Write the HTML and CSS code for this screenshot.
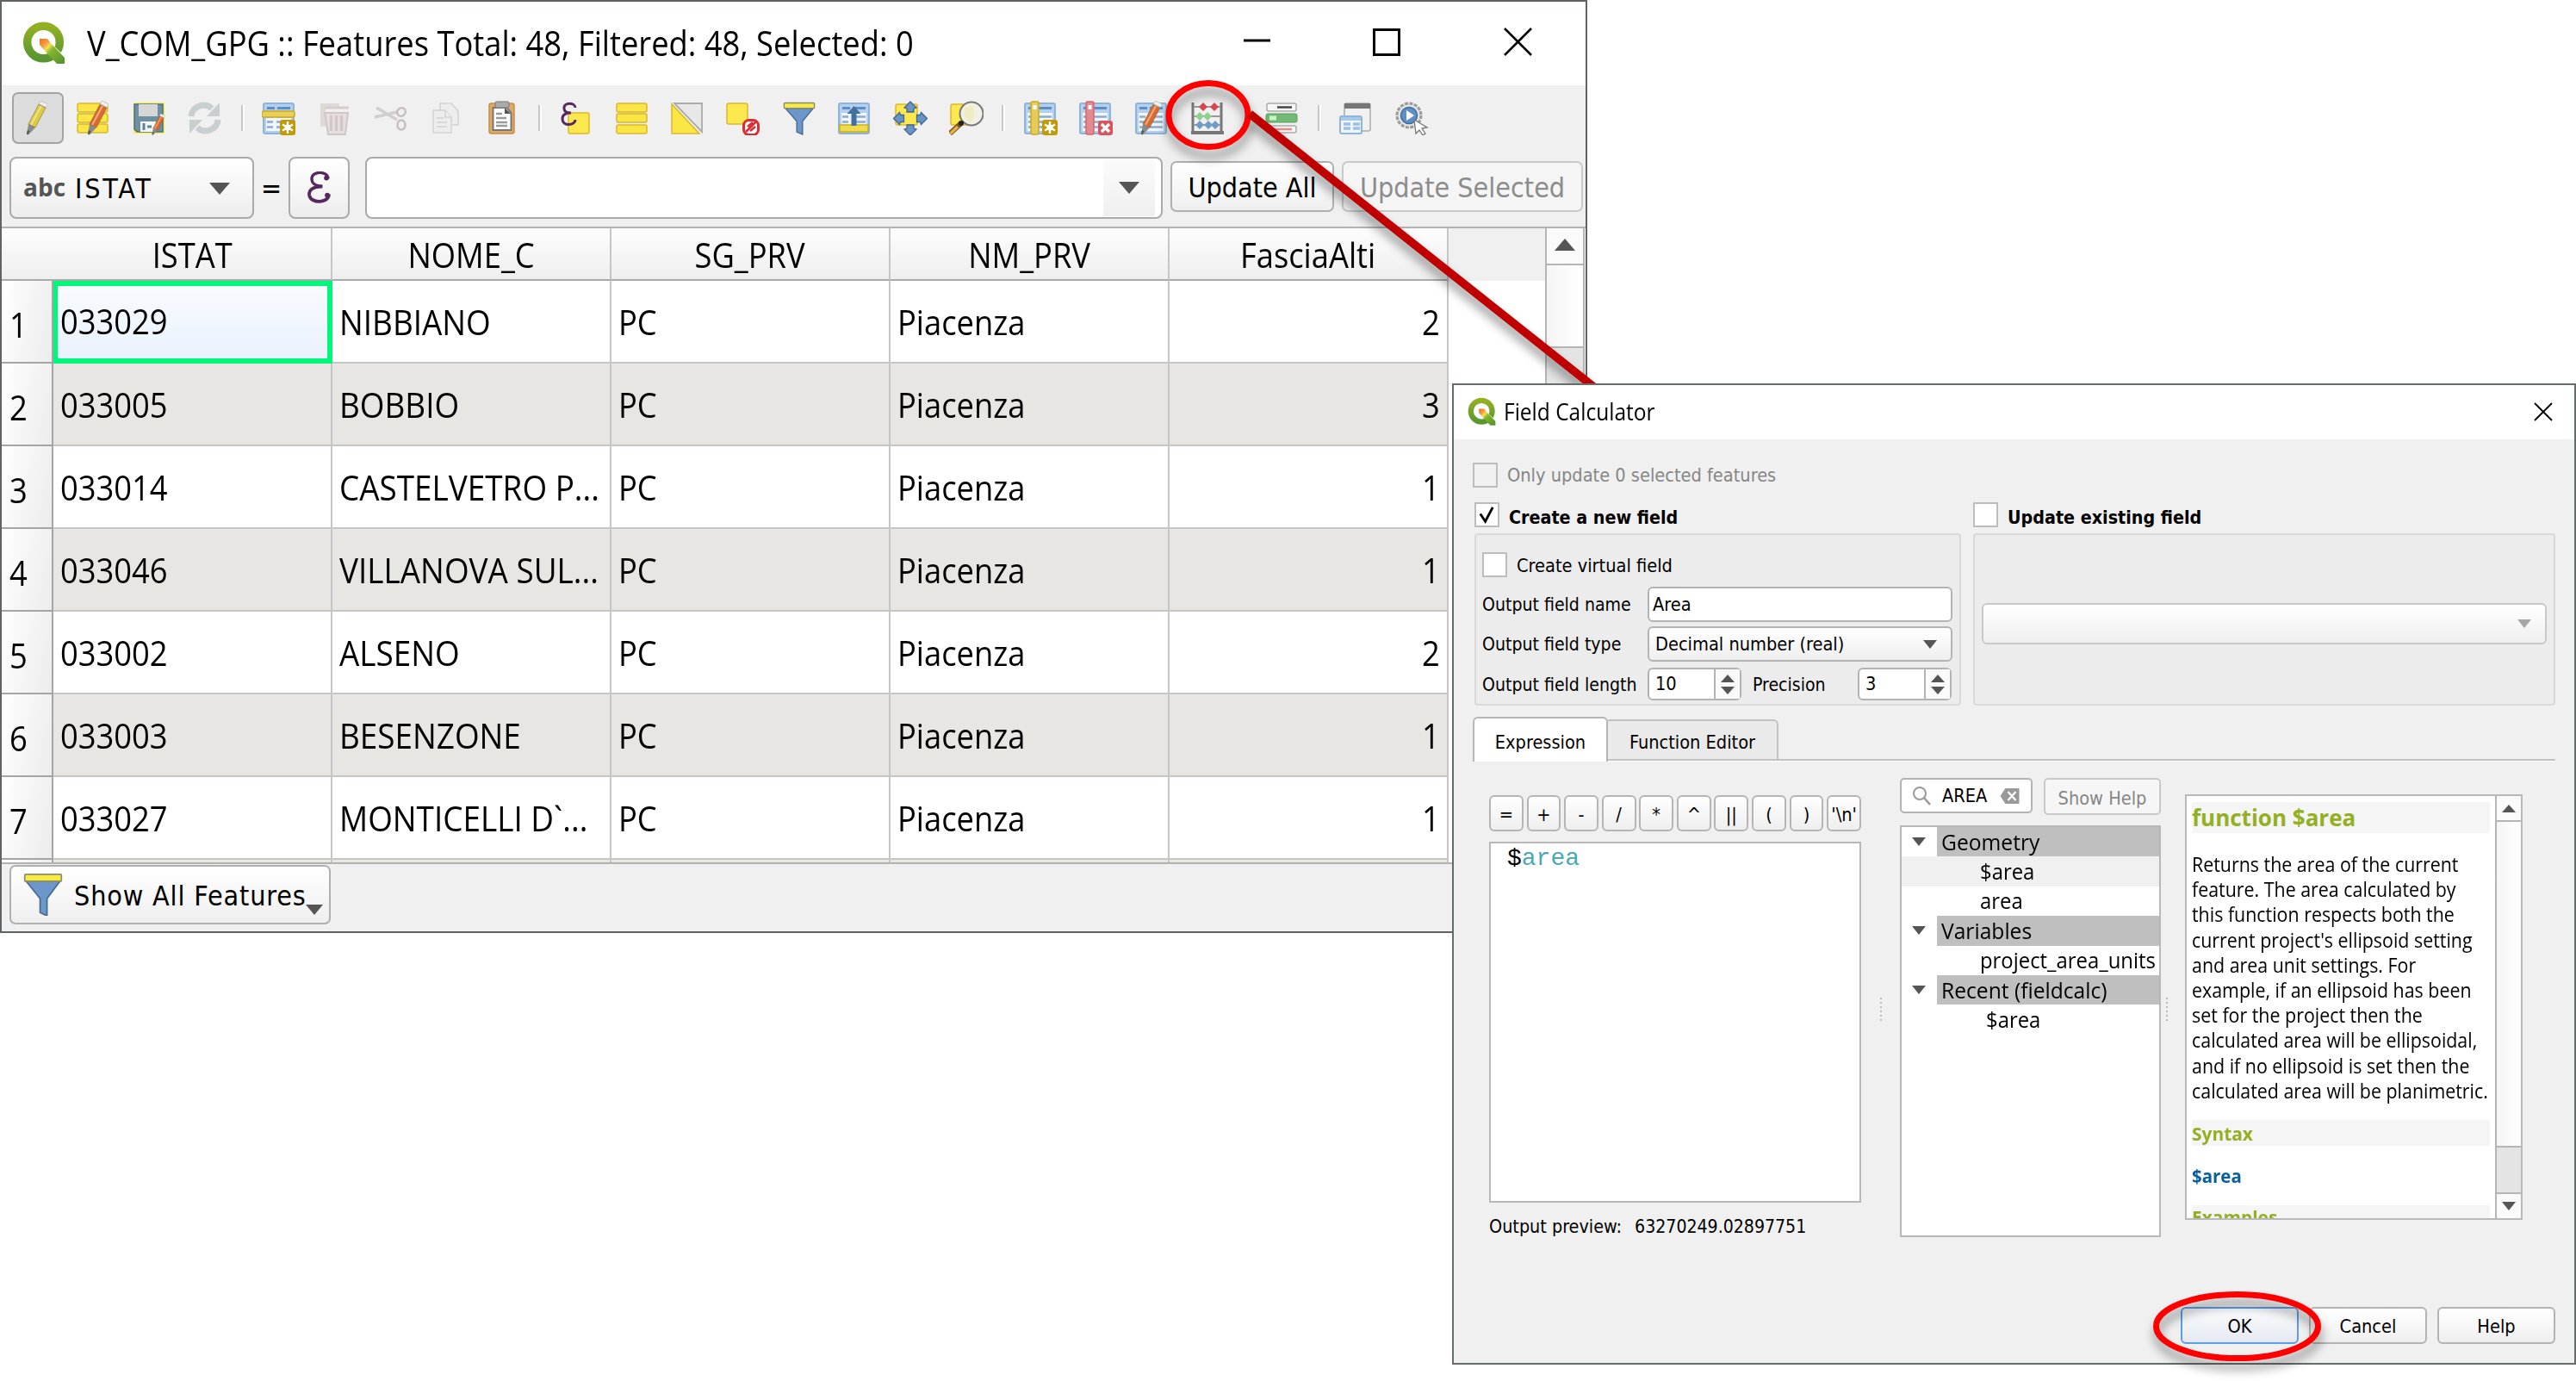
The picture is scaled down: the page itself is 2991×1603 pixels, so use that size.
FILE: index.html
```html
<!DOCTYPE html>
<html lang="en">
<head>
<meta charset="utf-8">
<title>Field Calculator</title>
<link rel="stylesheet" href="styles.css">
</head>
<body>
<svg class="defs" width="0" height="0">
  <defs>
    <linearGradient id="qg" x1="0" y1="0" x2="0" y2="1"><stop offset="0" stop-color="#93b023"/><stop offset="1" stop-color="#589632"/></linearGradient>
    <linearGradient id="qt" gradientUnits="userSpaceOnUse" x1="20" y1="22" x2="46" y2="47"><stop offset="0" stop-color="#ee7913"/><stop offset=".22" stop-color="#f5a04a"/><stop offset=".34" stop-color="#f2e25a"/><stop offset=".5" stop-color="#86b52a"/><stop offset="1" stop-color="#589632"/></linearGradient>
    <symbol id="logo" viewBox="0 0 50 49">
      <circle cx="24.5" cy="24" r="18.8" fill="none" stroke="url(#qg)" stroke-width="9.5"/>
      <path d="M27 32 L32 24 L50 41 L50 49 L42 49Z" fill="#fff"/>
      <path d="M20 20h9l4 5 16 17v7h-9L26 34l-6-7z" fill="url(#qt)"/>
    </symbol>
    <symbol id="pencil" viewBox="0 0 24 40">
      <path d="M14 4l8 4-12 23-8-4z" fill="currentColor"/>
      <path d="M17 6l-12 22" stroke="#fff" stroke-opacity=".45" stroke-width="2"/>
      <path d="M14 4l2.500-4 8 4-2.500 4z" fill="#eee" stroke="#bbb" stroke-width=".8"/>
      <path d="M2 27l8 4-8 8.500-2-1z" fill="#8b8b8b"/><path d="M1 34l2.500 1.500-2.500 4-1-1z" fill="#555"/>
      <path d="M14 4l8 4-12 23-8-4z" fill="none" stroke="#6b5a2a" stroke-opacity=".5" stroke-width="1"/>
    </symbol>
    <symbol id="grid" viewBox="0 0 40 40">
      <rect x="2" y="3" width="35" height="35" rx="2" fill="#b4d0ec" stroke="#8fb4da" stroke-width="2"/>
      <rect x="5" y="14" width="29" height="21" fill="#f1f6fb"/>
      <path d="M6 8.500h9M18 8.500h15" stroke="#5b8fc9" stroke-width="3"/>
      <path d="M6 18.500h7M17 18.500h16M6 24.500h7M17 24.500h16M6 30.500h7M17 30.500h16" stroke="#8aabcf" stroke-width="2.500"/>
    </symbol>
    <symbol id="star" viewBox="0 0 18 18"><rect width="18" height="18" rx="3" fill="#c39a06"/><path d="M9 2v14M3 5.500l12 7M15 5.500l-12 7" stroke="#fff" stroke-width="2.400"/><circle cx="9" cy="9" r="3.500" fill="#fff"/></symbol>
    <symbol id="funnel" viewBox="0 0 40 40">
      <path d="M3 8L17 24v13l7 3V24L37 8z" fill="#6d97c8" stroke="#466a94" stroke-width="1.500"/>
      <rect x="1.500" y="1.500" width="37" height="6.500" rx="1" fill="#f6ea44" stroke="#8d8d6a" stroke-width="1.500"/>
    </symbol>
  </defs>
</svg>

<section class="window table-window">
  <header class="titlebar">
    <svg class="logo"><use href="#logo"/></svg>
    <span class="ui title-text">V_COM_GPG :: Features Total: 48, Filtered: 48, Selected: 0</span>
    <svg class="window-buttons" viewBox="0 0 330 40"><path d="M1 16h31" stroke="#000" stroke-width="3"/><rect x="152.500" y="3.500" width="29" height="29" fill="none" stroke="#000" stroke-width="3"/><path d="M304 2l31 31M335 2l-31 31" stroke="#000" stroke-width="2.500"/></svg>
  </header>

  <nav class="toolbar">
    <div class="tool active"><svg viewBox="0 0 40 40"><use href="#pencil" class="yellow" x="7" width="24" height="40"/></svg></div>
    <div class="tool"><svg viewBox="0 0 40 40"><g fill="#fbe646" stroke="#d9b82c" stroke-width="1.500"><rect x="1" y="3" width="35" height="10" rx="2"/><rect x="1" y="15" width="35" height="10" rx="2"/><rect x="1" y="27" width="35" height="10" rx="2"/></g><use href="#pencil" class="orange" x="13" width="24" height="40"/></svg></div>
    <div class="tool"><svg viewBox="0 0 40 40"><rect x="1" y="2" width="36" height="36" rx="2" fill="#f8f33a"/><path d="M2 4h33v32H5l-3-3z" fill="#6f8fa3" stroke="#52707f" stroke-width="1.500"/><rect x="7" y="4" width="22" height="14" fill="#d6d6d6"/><rect x="9" y="24" width="18" height="12" fill="#f4f8fa"/><path d="M13 26v8M17 30h5" stroke="#5b83a0" stroke-width="3"/><use href="#pencil" class="orange" x="22" y="15" width="16" height="25"/></svg></div>
    <div class="tool"><svg viewBox="0 0 40 40"><path d="M4 18C5 6 20 1 28 9" fill="none" stroke="#c9ced1" stroke-width="7"/><path d="M37 2v16H22z" fill="#c9ced1"/><path d="M35 22c-1 12-16 17-24 9" fill="none" stroke="#c9ced1" stroke-width="7"/><path d="M2 38V22h15z" fill="#c9ced1"/></svg></div>
    <i class="sep"></i>
    <div class="tool"><svg viewBox="0 0 40 40"><use href="#grid"/><rect x="0" y="12" width="38" height="7" rx="2" fill="#e8cf5a" stroke="#cda91f" stroke-width="1.500"/><use href="#star" x="21" y="22" width="18" height="18"/></svg></div>
    <div class="tool"><svg viewBox="0 0 40 40" opacity=".55"><path d="M3 3h22v5h-16v22H3z" fill="#cfcac2"/><path d="M8 8h28" stroke="#c4aeb0" stroke-width="3"/><path d="M8 14h27l-3 25H12z" fill="#decfd0" stroke="#bda5a8" stroke-width="2"/><path d="M15.500 17v18M21.500 17v18M27.500 17v18" stroke="#bda5a8" stroke-width="3"/></svg></div>
    <div class="tool"><svg viewBox="0 0 40 40" fill="none" stroke="#c7bdbd" stroke-width="2.500"><path d="M3 8l24 14M1 19l26-6" stroke="#cfcfcf" stroke-width="3.500"/><ellipse cx="32" cy="13" rx="5" ry="4.500" transform="rotate(-40 32 13)"/><ellipse cx="32" cy="28" rx="4.500" ry="5.500"/></svg></div>
    <div class="tool"><svg viewBox="0 0 40 40" fill="#ededed" stroke="#d2d2d2" stroke-width="1.500"><path d="M13 3h13l8 9v16H13z"/><path d="M5 11h14l7 8v18H5z"/><path d="M9 20h8M9 25h12M9 30h12M19 11v8h7"/></svg></div>
    <div class="tool"><svg viewBox="0 0 40 40"><rect x="5" y="3" width="29" height="35" rx="2.500" fill="#dcab67" stroke="#c48f47" stroke-width="1.500"/><path d="M9.500 8h16l5 6v20h-21z" fill="#fff" stroke="#777" stroke-width="2"/><rect x="12" y="1" width="16" height="7" rx="1.500" fill="#aaa" stroke="#777"/><path d="M13 15h7M13 20h12M13 25h13M13 29h13" stroke="#9a9a9a" stroke-width="2.500"/><path d="M23 8l7 7h-7z" fill="#555"/></svg></div>
    <i class="sep"></i>
    <div class="tool"><svg viewBox="0 0 40 40"><rect x="11" y="14" width="24" height="24" rx="2" fill="#fde94d" stroke="#d9b82c" stroke-width="1.500"/><path d="M19 8c0-6-14-7-13 1 0 5 6 5 8 5-5 0-10 1-10 7 0 9 15 8 15 1" fill="none" stroke="#55285f" stroke-width="3"/></svg></div>
    <div class="tool"><svg viewBox="0 0 40 40" fill="#fbe646" stroke="#d9b82c" stroke-width="1.500"><rect x="2" y="3" width="35" height="10" rx="2"/><rect x="2" y="15" width="35" height="10" rx="2"/><rect x="2" y="28" width="35" height="10" rx="2"/></svg></div>
    <div class="tool"><svg viewBox="0 0 40 40"><path d="M2 4v34h32z" fill="#fbe646" stroke="#d9b82c" stroke-width="1.500"/><path d="M5 3h32v33z" fill="#e8e8e8" stroke="#aaa" stroke-width="1.800"/></svg></div>
    <div class="tool"><svg viewBox="0 0 40 40"><rect x="1" y="3" width="24" height="24" rx="2" fill="#fde94d" stroke="#d9b82c" stroke-width="1.500"/><rect x="20.500" y="22.500" width="17" height="17" rx="6" fill="#fff" stroke="#df2c33" stroke-width="3"/><path d="M23 36l12-12M25 30l6-5M28 35l6-5" stroke="#df2c33" stroke-width="2.500"/></svg></div>
    <div class="tool"><svg viewBox="0 0 40 40"><use href="#funnel" x="1" width="38" height="40"/></svg></div>
    <div class="tool"><svg viewBox="0 0 40 40"><use href="#grid"/><rect x="3" y="28" width="33" height="8" fill="#f0dc4a" stroke="#c9ae1e" stroke-width="1.500"/><path d="M19.500 6l8 9h-5v14h-6V15h-5z" fill="#44709f"/></svg></div>
    <div class="tool"><svg viewBox="0 0 40 40"><rect x="3" y="4" width="25" height="24" rx="2" fill="#fde94d" stroke="#d9b82c" stroke-width="1.500"/><g fill="#6a94c4" stroke="#3f6690" stroke-width="1.300"><path id="ar" d="M20 1l7 7-3 1v4h-8V9l-3-1z"/><use href="#ar" transform="rotate(90 20 20.500)"/><use href="#ar" transform="rotate(180 20 20.500)"/><use href="#ar" transform="rotate(270 20 20.500)"/></g></svg></div>
    <div class="tool"><svg viewBox="0 0 40 40"><rect x="2" y="4" width="20" height="24" rx="2" fill="#fde94d" stroke="#d9b82c" stroke-width="1.500"/><path d="M14 26L1 38" stroke="#6f5a2a" stroke-width="6"/><path d="M10 30L1.500 38" stroke="#f0b03a" stroke-width="3.500"/><circle cx="26" cy="15" r="13.500" fill="#f1f0e4" stroke="#777" stroke-width="2"/><path d="M26 5c4 5 4 15-1 20-8-2-9-14-6-18z" fill="#efe9a8" opacity=".6"/><circle cx="14" cy="26" r="3" fill="#222"/></svg></div>
    <i class="sep"></i>
    <div class="tool"><svg viewBox="0 0 40 40"><use href="#grid"/><rect x="9" y="1" width="9" height="38" rx="2" fill="#e3cc5a" stroke="#cda91f" stroke-width="1.500"/><rect x="11.500" y="5" width="4" height="5" fill="#fff"/><use href="#star" x="22" y="22" width="18" height="18"/></svg></div>
    <div class="tool"><svg viewBox="0 0 40 40"><use href="#grid"/><rect x="9" y="1" width="9" height="38" rx="2" fill="#e28a90" stroke="#d5656d" stroke-width="1.500"/><rect x="11.500" y="5" width="4" height="5" fill="#fff"/><rect x="23" y="23" width="17" height="17" rx="3" fill="#d8555e"/><path d="M27 27l9 9M36 27l-9 9" stroke="#fff" stroke-width="3.500"/></svg></div>
    <div class="tool"><svg viewBox="0 0 40 40"><use href="#grid"/><use href="#pencil" class="orange" x="8" width="24" height="40"/></svg></div>
    <div class="tool"><svg viewBox="0 0 40 40"><path d="M3 2v35M36 2v35" stroke="#777" stroke-width="3"/><path d="M4 7h31M4 18h31M4 28h31" stroke="#999" stroke-width="2"/><path d="M1 37h38" stroke="#777" stroke-width="4"/><g stroke-width="1"><path d="M15 2l5 5-5 5-5-5zM28 2l5 5-5 5-5-5z" fill="#d5474d"/><path d="M11 13l5 5-5 5-5-5zM20 13l5 5-5 5-5-5z" fill="#8fd08c"/><path d="M11 23l5 5-5 5-5-5zM21 23l5 5-5 5-5-5zM29 23l5 5-5 5-5-5z" fill="#6d9cc4"/></g></svg></div>
    <i class="sep hidden"></i>
    <div class="tool"><svg viewBox="0 0 40 40"><g fill="#f6f6f6" stroke="#aaa" stroke-width="1.500"><rect x="3" y="3" width="34" height="9" rx="2"/><rect x="3" y="29" width="34" height="8" rx="2"/></g><rect x="2" y="15" width="36" height="10" rx="2" fill="#74b877" stroke="#57a05b"/><rect x="6" y="17.500" width="8" height="5" fill="#c9f7c4"/><path d="M15 7.500h17" stroke="#444" stroke-width="2.500"/><path d="M8 33h24" stroke="#e58b8b" stroke-width="2.500"/></svg></div>
    <i class="sep"></i>
    <div class="tool"><svg viewBox="0 0 40 40"><rect x="7" y="3" width="30" height="32" rx="2" fill="#f1f1f1" stroke="#aaa" stroke-width="1.500"/><path d="M7 6h30" stroke="#777" stroke-width="6"/><rect x="2" y="18" width="25" height="20" rx="2" fill="#eef5fb" stroke="#8fb4da" stroke-width="2"/><path d="M3 21h23" stroke="#a9c9e8" stroke-width="4"/><path d="M6 27h8M17 27h8M6 32h8M17 32h8" stroke="#9dc0e4" stroke-width="3.500"/></svg></div>
    <div class="tool"><svg viewBox="0 0 40 40"><circle cx="17" cy="17" r="14" fill="#e4e4e4" stroke="#999" stroke-width="3" stroke-dasharray="4 1.500"/><circle cx="17" cy="17" r="9.500" fill="#5f8fc6" stroke="#3d6da2" stroke-width="1.500"/><path d="M14 11l9 6-9 6z" fill="#fff"/><path d="M23 22l15 9-6 1 4 6-3 2-4-6-4 4z" fill="#fff" stroke="#777" stroke-width="1.300"/></svg></div>
  </nav>

  <div class="field-bar">
    <div class="combo field-combo"><b class="abc">abc</b><span class="tah">ISTAT</span><i class="arrow"></i></div>
    <span class="equals">=</span>
    <div class="combo epsilon"><svg viewBox="0 0 30 40"><path d="M26 9C26-1 6-1 6 9c0 7 7 9 13 9" fill="none" stroke="#55285f" stroke-width="3.500"/><path d="M19 18.500C9 18 2 22 3 29c2 11 24 10 24-1" fill="none" stroke="#55285f" stroke-width="4"/><circle cx="24" cy="8" r="3" fill="#55285f"/><circle cx="25" cy="29" r="3" fill="#55285f"/></svg></div>
    <div class="combo value-combo"><div class="drop"><i class="arrow"></i></div></div>
    <div class="btn update-all tah">Update All</div>
    <div class="btn update-sel tah disabled">Update Selected</div>
  </div>

  <div class="table-area">
    <div class="grid">
      <div class="row head"><div></div><div><span class="ui">ISTAT</span></div><div><span class="ui">NOME_C</span></div><div><span class="ui">SG_PRV</span></div><div><span class="ui">NM_PRV</span></div><div><span class="ui">FasciaAlti</span></div></div>
      <div class="row"><div class="n"><span class="ui">1</span></div><div class="current"><span class="ui">033029</span></div><div><span class="ui caps">NIBBIANO</span></div><div><span class="ui">PC</span></div><div><span class="ui">Piacenza</span></div><div class="num"><span class="ui">2</span></div></div>
      <div class="row alt"><div class="n"><span class="ui">2</span></div><div><span class="ui">033005</span></div><div><span class="ui caps">BOBBIO</span></div><div><span class="ui">PC</span></div><div><span class="ui">Piacenza</span></div><div class="num"><span class="ui">3</span></div></div>
      <div class="row"><div class="n"><span class="ui">3</span></div><div><span class="ui">033014</span></div><div><span class="ui caps">CASTELVETRO P...</span></div><div><span class="ui">PC</span></div><div><span class="ui">Piacenza</span></div><div class="num"><span class="ui">1</span></div></div>
      <div class="row alt"><div class="n"><span class="ui">4</span></div><div><span class="ui">033046</span></div><div><span class="ui caps">VILLANOVA SUL...</span></div><div><span class="ui">PC</span></div><div><span class="ui">Piacenza</span></div><div class="num"><span class="ui">1</span></div></div>
      <div class="row"><div class="n"><span class="ui">5</span></div><div><span class="ui">033002</span></div><div><span class="ui caps">ALSENO</span></div><div><span class="ui">PC</span></div><div><span class="ui">Piacenza</span></div><div class="num"><span class="ui">2</span></div></div>
      <div class="row alt"><div class="n"><span class="ui">6</span></div><div><span class="ui">033003</span></div><div><span class="ui caps">BESENZONE</span></div><div><span class="ui">PC</span></div><div><span class="ui">Piacenza</span></div><div class="num"><span class="ui">1</span></div></div>
      <div class="row"><div class="n"><span class="ui">7</span></div><div><span class="ui">033027</span></div><div><span class="ui caps">MONTICELLI D`...</span></div><div><span class="ui">PC</span></div><div><span class="ui">Piacenza</span></div><div class="num"><span class="ui">1</span></div></div>
      <div class="row alt sliver"><div class="n"></div><div></div><div></div><div></div><div></div><div></div></div>
    </div>
    <div class="filler"></div>
    <div class="scroll big"><div class="step"><i class="arrow up"></i></div><div class="thumb"></div><div class="track"></div></div>
  </div>

  <footer class="status"><div class="btn show-all"><svg viewBox="0 0 40 40" preserveAspectRatio="none"><use href="#funnel"/></svg><span class="tah">Show All Features</span><i class="arrow"></i></div></footer>
</section>

<svg class="annotation pointer" viewBox="0 0 2991 1603">
  <ellipse cx="1403" cy="133.500" rx="46" ry="37" fill="none" stroke="#fe0000" stroke-width="7"/>
  <path d="M1451 132L1858 455" stroke="#c00000" stroke-width="9.500"/>
</svg>

<section class="window dialog">
  <header class="titlebar">
    <svg class="logo"><use href="#logo"/></svg>
    <span class="ui title-text">Field Calculator</span>
    <svg class="close" viewBox="0 0 22 22"><path d="M1 1l20 20M21 1L1 21" stroke="#000" stroke-width="1.800"/></svg>
  </header>
  <div class="body">
    <div class="check-row only"><i class="check off"></i><span>Only update 0 selected features</span></div>
    <div class="groups">
      <div class="group">
        <div class="check-row group-title"><i class="check"><svg viewBox="0 0 26 26"><path d="M5 12l6 9L20 4" fill="none" stroke="#000" stroke-width="3"/></svg></i><b>Create a new field</b></div>
        <div class="box">
          <div class="check-row virtual"><i class="check"></i><span>Create virtual field</span></div>
          <div class="form-row"><label>Output field name</label><div class="input">Area</div></div>
          <div class="form-row type"><label>Output field type</label><div class="input select">Decimal number (real)<i class="arrow"></i></div></div>
          <div class="form-row length"><label>Output field length</label>
            <div class="spin"><span>10</span><div><i class="arrow up"></i><i class="arrow"></i></div></div>
            <label class="precision">Precision</label>
            <div class="spin"><span>3</span><div><i class="arrow up"></i><i class="arrow"></i></div></div>
          </div>
        </div>
      </div>
      <div class="group">
        <div class="check-row group-title"><i class="check"></i><b>Update existing field</b></div>
        <div class="box second"><div class="input select disabled-select"><i class="arrow"></i></div></div>
      </div>
    </div>
    <div class="tabs"><div class="tab on">Expression</div><div class="tab">Function Editor</div></div>
    <div class="panes">
      <div class="editor-pane">
        <div class="ops"><div>=</div><div>+</div><div>-</div><div>/</div><div>*</div><div>^</div><div>||</div><div>(</div><div>)</div><div>'\n'</div></div>
        <div class="editor">$<em>area</em></div>
        <div class="preview"><span>Output preview:</span><span>63270249.02897751</span></div>
      </div>
      <div class="splitter"><i></i></div>
      <div class="tree-pane">
        <div class="search-row">
          <div class="search"><svg class="lens" viewBox="0 0 22 22"><circle cx="9" cy="8" r="7" fill="none" stroke="#999" stroke-width="2"/><path d="M14 13l7 8" stroke="#999" stroke-width="2.500"/></svg><span>AREA</span><svg class="clear" viewBox="0 0 22 18"><path d="M6 0h16v18H6L0 9z" fill="#999"/><path d="M9 4l9 10M18 4L9 14" stroke="#fff" stroke-width="2.200"/></svg></div>
          <div class="show-help">Show Help</div>
        </div>
        <div class="tree">
          <div class="node"><i class="arrow"></i><b><span>Geometry</span></b></div>
          <div class="leaf hover"><span>$area</span></div>
          <div class="leaf"><span>area</span></div>
          <div class="node"><i class="arrow"></i><b><span>Variables</span></b></div>
          <div class="leaf"><span>project_area_units</span></div>
          <div class="node"><i class="arrow"></i><b><span>Recent (fieldcalc)</span></b></div>
          <div class="leaf deep"><span>$area</span></div>
        </div>
      </div>
      <div class="splitter narrow"><i></i></div>
      <div class="help">
        <div class="help-text">
          <h1><span>function $area</span></h1>
          <p>Returns the area of the current<br>feature. The area calculated by<br>this function respects both the<br>current project's ellipsoid setting<br>and area unit settings. For<br>example, if an ellipsoid has been<br>set for the project then the<br>calculated area will be ellipsoidal,<br>and if no ellipsoid is set then the<br>calculated area will be planimetric.</p>
          <h2><span>Syntax</span></h2>
          <code>$area</code>
          <h2><span>Examples</span></h2>
        </div>
        <div class="scroll"><div class="step"><i class="arrow up"></i></div><div class="thumb"></div><div class="track"></div><div class="step"><i class="arrow"></i></div></div>
      </div>
    </div>
    <div class="buttons"><div class="ok">OK</div><div>Cancel</div><div>Help</div></div>
  </div>
</section>

<svg class="annotation" viewBox="0 0 2991 1603">
  <ellipse cx="2597.500" cy="1539.500" rx="94" ry="37" fill="none" stroke="#fe0000" stroke-width="7"/>
</svg>
</body>
</html>
```
FILE: styles.css
```css
* { box-sizing: border-box; }
body { margin: 0; width: 2991px; height: 1603px; position: relative; overflow: hidden; background: #fff; color: #000; }
.defs { position: absolute; }
i, em { font-style: normal; }

.window { position: absolute; background: #f0f0f0; display: flex; flex-direction: column; overflow: hidden; white-space: nowrap; }
.ui { font-family: "Open Sans", "Noto Sans", sans-serif; display: inline-block; transform: scaleX(.908); transform-origin: left center; }
.tah { font-family: "DejaVu Sans Condensed", "DejaVu Sans", sans-serif; font-size: 32px; }
.arrow { display: block; width: 0; height: 0; border: 12px solid transparent; border-top: 14px solid #555; border-bottom: 0; }
.arrow.up { border-top: 0; border-bottom: 14px solid #555; }
.annotation { position: absolute; left: 0; top: 0; width: 2991px; height: 1603px; pointer-events: none; filter: drop-shadow(1px 10px 6px rgba(0, 0, 0, .4)); }

/* attribute table window */
.table-window { left: 0; top: 0; width: 1843px; height: 1083px; border: 2px solid #606366; }
.titlebar { background: #fff; display: flex; align-items: center; flex: none; }
.table-window .titlebar { height: 97px; padding-left: 24px; }
.table-window .logo { width: 50px; height: 49px; margin-top: -3px; }
.table-window .title-text { font-size: 40px; margin: -3px 0 0 25px; width: 1342px; }
.window-buttons { width: 330px; height: 40px; overflow: visible; }

.toolbar { height: 76px; display: flex; align-items: center; padding-left: 10px; flex: none; }
.tool { width: 64.65px; height: 60px; display: flex; align-items: center; justify-content: center; flex: none; }
.tool svg { width: 40px; height: 40px; }
.tool.active { width: 60px; margin: 0 2.300px; background: #dcdcdc; border: 2px solid #a3a3a3; border-radius: 7px; }
.sep { width: 2px; height: 30px; margin: 0 10px 0 9.500px; background: #c8c8c8; box-shadow: 2px 0 #fff; flex: none; }
.sep.hidden { visibility: hidden; }
.yellow { color: #dccb3f; }
.orange { color: #dc6a2c; }

.field-bar { height: 88px; display: flex; align-items: flex-start; padding: 7px 0 0 9px; flex: none; }
.combo { height: 72px; border: 2px solid #aaa; border-radius: 8px; background: linear-gradient(#fff, #ededed); display: flex; align-items: center; flex: none; }
.field-combo { width: 284px; padding: 2px 26px 0 14px; }
.field-combo .tah { letter-spacing: 2.800px; }
.field-combo .arrow, .disabled-select .arrow { margin-left: auto; }
.abc { font: bold 28px "Open Sans", "Noto Sans", sans-serif; color: #555; width: 60px; margin-top: -5px; }
.equals { font: 32px/74px "DejaVu Sans Condensed", "DejaVu Sans", sans-serif; width: 40px; text-align: center; }
.epsilon { width: 71px; justify-content: center; }
.epsilon svg { width: 29px; height: 38px; }
.value-combo { width: 926px; margin-left: 18px; background: #fff; justify-content: flex-end; padding-right: 7px; }
.drop { width: 60px; height: 66px; background: linear-gradient(#fbfbfb, #efefef); display: flex; align-items: center; justify-content: center; }
.btn { border: 2px solid #b0b0b0; border-radius: 7px; background: linear-gradient(#fff, #efefef); display: flex; align-items: center; justify-content: center; flex: none; }
.update-all, .update-sel { height: 59px; margin-top: 5px; padding-top: 2px; }
.update-all { width: 190px; margin-left: 9px; }
.update-sel { width: 280px; margin-left: 9px; }
.disabled { color: #8c8c8c; border-color: #c9c9c9; background: #f5f5f5; }

.table-area { display: flex; height: 740px; border-top: 2px solid #b2b2b2; border-bottom: 2px solid #b2b2b2; background: #fff; flex: none; overflow: hidden; }
.grid { width: 1680px; flex: none; font-size: 40px; }
.row { display: grid; grid-template-columns: 60px repeat(5, 324px); height: 96px; }
.row > div { border-right: 2px solid #c6c6c6; border-bottom: 2px solid #c6c6c6; display: flex; align-items: center; padding: 0 8px; overflow: hidden; }
.row.alt > div { background: #e8e6e2; }
.row.head { height: 61px; background: linear-gradient(#fdfdfd, #eee); }
.row.head > div { justify-content: center; border-bottom-color: #aaa; padding-top: 2px; }
.row.head > div:first-child { border-right: 0; }
.row.head .ui { transform-origin: center; }
.row > .n, .row.alt > .n { background: linear-gradient(100deg, #fff, #ececec); border-color: #a5a5a5; padding: 7px 0 0 9px; }
.row > .num { justify-content: flex-end; }
.num .ui { transform-origin: right center; }
.caps { transform: scaleX(.922); }
.row > .current { border: 6px solid #00f77b; border-left-width: 5px; background: linear-gradient(#f8fbff, #eaf2fc); padding: 0 3px; }
.current .ui { margin-top: -4px; }
.row.sliver { height: 6px; }
.filler { width: 112px; flex: none; background: linear-gradient(#f0f0f0 61px, #fff 61px); }
.scroll { display: flex; flex-direction: column; border-left: 2px solid #b5b5b5; flex: none; }
.scroll.big { width: 46px; border-right: 2px solid #b5b5b5; }
.step { height: 30px; display: flex; align-items: center; justify-content: center; border-bottom: 2px solid #b5b5b5; background: #fafafa; flex: none; }
.big .step { height: 43px; }
.big .step .arrow { margin-top: -4px; }
.thumb { background: linear-gradient(90deg, #f5f5f5, #fff); border-bottom: 2px solid #b5b5b5; }
.big .thumb { height: 96px; flex: none; }
.track { flex: 1; background: #e4e4e4; }
.status { padding: 1px 0 0 9px; }
.show-all { width: 373px; height: 69px; justify-content: flex-start; padding-left: 14px; }
.show-all svg { width: 46px; height: 50px; margin: -2px 13px 0 0; }
.show-all .tah { letter-spacing: .85px; margin-top: 3px; }
.show-all .arrow { margin: 34px 0 0 -1px; border-width: 12px 10px 0; }

/* field calculator dialog */
.dialog { left: 1686px; top: 445px; width: 1305px; height: 1139px; border: 2px solid #666b6b; font: 21.600px "DejaVu Sans Condensed", "DejaVu Sans", sans-serif; }
.dialog .titlebar { height: 63px; padding-left: 16px; }
.dialog .logo { width: 33px; height: 33px; margin-top: -3px; }
.dialog .title-text { font-size: 27px; margin: -2px 0 0 9px; }
.close { width: 22px; height: 22px; margin: -2px 25px 0 auto; }
.body { flex: 1; display: flex; flex-direction: column; padding: 27px 22px 22px; }
.check-row { display: flex; height: 29px; align-items: center; gap: 11px; }
.check { width: 29px; height: 29px; border: 2px solid #bdbdbd; background: #fff; flex: none; display: block; }
.check.off { background: #f0f0f0; }
.only { color: #868686; }
.groups { display: grid; grid-template-columns: 565px 676px; column-gap: 14px; padding-left: 2px; margin-top: 17px; }
.group-title b { padding-top: 5px; font-size: 21.300px; }
.box { height: 200px; margin-top: 7px; border: 2px solid #d9d9d9; border-radius: 4px; background: #ececec; padding: 20px 8px 0 7px; }
.virtual span { padding-top: 2px; }
.form-row { display: flex; align-items: center; height: 41px; margin-top: 11px; }
.form-row.type { margin-top: 5px; }
.form-row.length { margin-top: 7px; height: 38px; }
.form-row label { width: 192px; flex: none; font-size: 21.100px; }
.input { flex: 1; height: 100%; border: 2px solid #b3b3b3; border-radius: 6px; background: #fff; display: flex; align-items: center; padding-left: 4px; }
.input.select { padding: 0 16px 0 7px; background: linear-gradient(#fff, #efefef); justify-content: space-between; }
.select .arrow, .tree .arrow, .help .arrow { border-width: 10px 8.500px 0; }
.spin { width: 109px; height: 38px; border: 2px solid #b3b3b3; border-radius: 6px; background: #fff; display: flex; }
.spin span { flex: 1; padding: 4px 0 0 7px; }
.spin div { width: 30px; border-left: 2px solid #b3b3b3; display: flex; flex-direction: column; align-items: center; justify-content: center; gap: 5px; background: #fafafa; }
.spin .arrow { border-width: 9px 8px 0; }
.spin .arrow.up, .help .arrow.up { border-width: 0 8px 9px; }
.form-row .precision { width: 135px; padding-left: 13px; }
.second { padding: 79px 8px 0; }
.disabled-select { height: 48px; border-color: #c9c9c9; }
.disabled-select .arrow { border-top-color: #a6a6a6; }

.tabs { display: flex; align-items: flex-end; height: 51px; margin-top: 13px; border-bottom: 2px solid #c2c2c2; flex: none; box-shadow: 0 1px #fff; }
.tab { height: 46px; width: 198px; border: 2px solid #c2c2c2; border-bottom: 0; border-left: 0; border-radius: 0 6px 0 0; background: #eaeaea; display: flex; align-items: center; justify-content: center; padding-top: 4px; }
.tab.on { width: 157px; height: 52px; margin-bottom: -3px; border: 2px solid #b5b5b5; border-bottom: 0; border-radius: 6px 6px 0 0; background: #fff; }
.panes { display: flex; padding-left: 19px; height: 556px; align-items: flex-start; }
.editor-pane { width: 432px; padding-top: 40px; flex: none; }
.ops { display: flex; justify-content: space-between; }
.ops div { width: 39.800px; height: 42px; border: 2px solid #b5b5b5; border-radius: 6px; background: linear-gradient(#fff, #eee); display: flex; align-items: center; justify-content: center; padding-top: 3px; }
.editor { margin-top: 12px; height: 419px; border: 2px solid #b8b8b8; background: #fff; padding: 2px 0 0 19px; font: 28px "Liberation Mono", monospace; }
.editor em { color: #48a9b5; }
.preview { display: flex; gap: 15px; margin-top: 15px; font-size: 21.400px; }
.preview span:last-child { font-size: 21.100px; }
.splitter { width: 45px; flex: none; padding: 275px 0 0 22px; }
.splitter i { display: block; width: 2px; height: 29px; background: repeating-linear-gradient(#bbb 0 2px, transparent 2px 5px); }
.splitter.narrow { width: 28px; padding-left: 6px; }
.tree-pane { width: 303px; padding-top: 20px; flex: none; }
.search-row { display: flex; gap: 13px; align-items: flex-start; }
.search { width: 154px; height: 41px; border: 2px solid #b3b3b3; border-radius: 5px; background: #fff; display: flex; align-items: center; padding: 0 12px; }
.search span { width: 55px; margin-left: 13px; }
.lens { width: 22px; height: 22px; flex: none; }
.clear { width: 23px; height: 18px; margin-left: 12px; flex: none; }
.show-help { width: 136px; height: 43px; border: 2px solid #c9c9c9; border-radius: 5px; background: #f6f6f6; color: #868686; display: flex; align-items: center; justify-content: center; padding-top: 3px; }
.tree { margin-top: 12px; height: 478px; border: 2px solid #b8b8b8; background: #fff; font: 25px "Open Sans", "Noto Sans", sans-serif; }
.tree > div { height: 34.400px; display: flex; align-items: center; }
.tree span { display: inline-block; transform: scaleX(.955); transform-origin: left center; line-height: 33px; }
.tree .arrow { margin: -1px 13px 0 12px; }
.tree b { flex: 1; height: 100%; background: #bfbfbf; font-weight: 400; padding-left: 5px; }
.tree b span { transform: scaleX(.985); }
.leaf { padding-left: 91px; }
.leaf.deep { padding-left: 98px; }
.leaf.hover { background: #f0f0f0; }
.help { width: 392px; height: 494px; margin-top: 39px; border: 2px solid #b8b8b8; background: #fff; display: flex; flex: none; overflow: hidden; }
.help-text { flex: 1; padding: 7px 6px 0; font: 23px "Open Sans", "Noto Sans", sans-serif; overflow: hidden; }
.help h1, .help h2 { margin: 0; background: #f5f5f5; color: #93b023; }
.help h1 { font-size: 26px; line-height: 36px; }
.help h2 { font-size: 22px; line-height: 30px; }
.help h2 span { display: inline-block; transform: scaleX(.95); transform-origin: left; }
.help p { margin: 22px 0 19px; line-height: 29.200px; transform: scaleX(.93); transform-origin: left; }
.help code { display: block; font: bold 22px/30px "Open Sans", "Noto Sans", sans-serif; color: #0a5f9e; margin: 19px 0 20px; transform: scaleX(.93); transform-origin: left; }
.help h2:last-child { line-height: 26px; }
.help .scroll { width: 30px; }
.help .thumb { height: 378px; flex: none; }
.help .step:last-child { border-top: 2px solid #b5b5b5; border-bottom: 0; }
.buttons { display: flex; justify-content: flex-end; gap: 12px; margin-top: auto; }
.buttons div { width: 137px; height: 43px; border: 2px solid #b3b3b3; border-radius: 6px; background: linear-gradient(#fff, #efefef); display: flex; align-items: center; justify-content: center; padding-top: 2px; }
.buttons .ok { border-color: #5c9fe8; background: linear-gradient(#fbfcfe, #e5e9f1); }
```
